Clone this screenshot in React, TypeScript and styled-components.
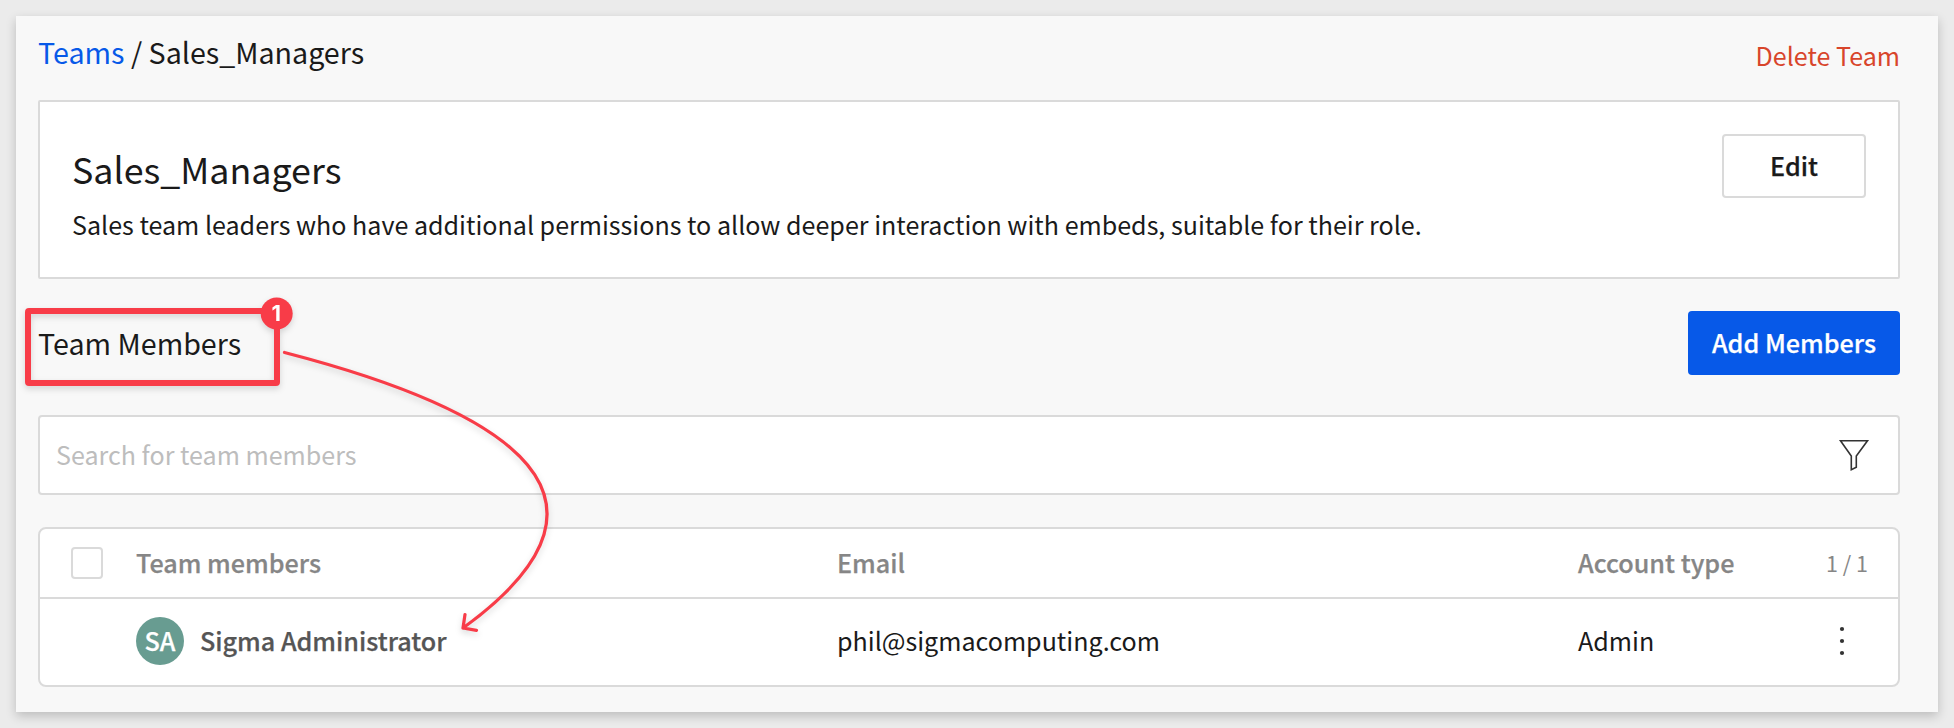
import React from "react";
import styled, { createGlobalStyle, css } from "styled-components";

const GlobalStyle = createGlobalStyle`
  *, *::before, *::after { box-sizing: border-box; }
  body {
    margin: 0;
    background: #ebebeb;
    color: #1a1a1a;
    font-family: "Noto Sans CJK SC", "Noto Sans", sans-serif;
    font-size: 25.07px;
    line-height: 36px;
  }
`;

const border = "#dadada";

const semibold = css`
  font-size: 25.15px;
  font-weight: 500;
  -webkit-text-stroke: 0.25px currentColor;
`;

const Page = styled.div`
  height: 728px;
  padding: 16px;
  overflow: hidden;
`;

const Card = styled.main`
  position: relative;
  height: 696px;
  padding: 16px 38px 0 22px;
  background: #f8f8f8;
  box-shadow: 0 4px 10px rgba(0, 0, 0, 0.2);
`;

const TopBar = styled.header`
  display: flex;
  justify-content: space-between;
  height: 68px;
  padding-top: 2px;
`;

const Breadcrumb = styled.nav`
  font-size: 28.65px;
  line-height: 36px;
  white-space: pre;
`;

const TeamsLink = styled.a`
  color: #0759e8;
`;

const DeleteLink = styled.button`
  align-self: flex-start;
  margin-top: 3px;
  padding: 0;
  border: 0;
  background: none;
  color: #d8452b;
  font: inherit;
`;

const InfoPanel = styled.section`
  display: flex;
  justify-content: space-between;
  align-items: flex-start;
  height: 179px;
  padding: 32px;
  border: 2px solid ${border};
  border-radius: 2px;
  background: #fff;
`;

const TeamName = styled.h1`
  margin: 10px 0 0;
  font-size: 35.8px;
  font-weight: 400;
  line-height: 48px;
`;

const Description = styled.p`
  margin: 14px 0 0;
`;

const Button = styled.button<{ $primary?: boolean }>`
  width: ${(p) => (p.$primary ? 212 : 144)}px;
  height: 64px;
  padding: 0 0 2px;
  border: ${(p) => (p.$primary ? "0" : `2px solid ${border}`)};
  border-radius: 4px;
  background: ${(p) => (p.$primary ? "#0759e8" : "#fff")};
  color: ${(p) => (p.$primary ? "#fff" : "#1a1a1a")};
  font-family: inherit;
  ${semibold}
`;

const SectionBar = styled.div`
  display: flex;
  justify-content: space-between;
  align-items: center;
  height: 64px;
  margin-top: 32px;
`;

const SectionTitle = styled.h2`
  margin: 0;
  font-size: 28.65px;
  font-weight: 400;
`;

const SearchBox = styled.div`
  display: flex;
  justify-content: space-between;
  align-items: center;
  height: 80px;
  margin-top: 40px;
  padding: 0 28px 0 16px;
  border: 2px solid ${border};
  border-radius: 4px;
  background: #fff;
`;

const Placeholder = styled.span`
  padding-bottom: 2px;
  color: #bdbdbd;
`;

const Table = styled.section`
  height: 160px;
  margin-top: 32px;
  border: 2px solid ${border};
  border-radius: 8px;
  background: #fff;
`;

const Row = styled.div<{ $head?: boolean }>`
  display: grid;
  grid-template-columns: 96px 701px 741px 1fr;
  align-items: center;
  height: ${(p) => (p.$head ? 70 : 84)}px;
  border-bottom: ${(p) => (p.$head ? `2px solid ${border}` : "0")};
  color: ${(p) => (p.$head ? "#868686" : "#1a1a1a")};
`;

const Label = styled.span`
  padding-bottom: 2px;
  ${semibold}
`;

const Value = styled.span`
  padding-bottom: 2px;
`;

const Checkbox = styled.span`
  width: 32px;
  height: 32px;
  margin-left: 31px;
  border: 2px solid ${border};
  border-radius: 4px;
`;

const Member = styled.div`
  display: flex;
  align-items: center;
  gap: 16px;
  color: #555;
`;

const Avatar = styled.span`
  width: 48px;
  height: 48px;
  border-radius: 50%;
  background: #689c91;
  color: #fff;
  line-height: 46px;
  text-align: center;
  ${semibold}
`;

const LastCell = styled.div`
  display: flex;
  align-items: center;
  justify-content: space-between;
`;

const Count = styled.span`
  margin-right: 30px;
  font-size: 21.5px;
`;

const MenuDots = styled.svg`
  margin-right: 52px;
`;

const Annotations = styled.svg`
  position: absolute;
  left: 0;
  top: 280px;
  filter: drop-shadow(0 3px 3px rgba(0, 0, 0, 0.15));
`;

export default function App() {
  return (
    <Page>
      <GlobalStyle />
      <Card>
        <TopBar>
          <Breadcrumb>
            <TeamsLink>Teams</TeamsLink> / Sales_Managers
          </Breadcrumb>
          <DeleteLink>Delete Team</DeleteLink>
        </TopBar>
        <InfoPanel>
          <div>
            <TeamName>Sales_Managers</TeamName>
            <Description>
              Sales team leaders who have additional permissions to allow deeper interaction with embeds, suitable for
              their role.
            </Description>
          </div>
          <Button>Edit</Button>
        </InfoPanel>
        <SectionBar>
          <SectionTitle>Team Members</SectionTitle>
          <Button $primary>Add Members</Button>
        </SectionBar>
        <SearchBox>
          <Placeholder>Search for team members</Placeholder>
          <svg width="32" height="32" viewBox="0 0 32 32" fill="none" stroke="#333" strokeWidth="1.6">
            <path d="M2.5 1.8H29.5L18.3 17V28.3L13.3 30.7V17Z" />
          </svg>
        </SearchBox>
        <Table>
          <Row $head>
            <Checkbox />
            <Label>Team members</Label>
            <Label>Email</Label>
            <LastCell>
              <Label>Account type</Label>
              <Count>1 / 1</Count>
            </LastCell>
          </Row>
          <Row>
            <span />
            <Member>
              <Avatar>SA</Avatar>
              <Label>Sigma Administrator</Label>
            </Member>
            <Value>phil@sigmacomputing.com</Value>
            <LastCell>
              <Value>Admin</Value>
              <MenuDots width="8" height="32" fill="#333">
                <circle cx="4" cy="4" r="2.1" />
                <circle cx="4" cy="16" r="2.1" />
                <circle cx="4" cy="28" r="2.1" />
              </MenuDots>
            </LastCell>
          </Row>
        </Table>
        <Annotations width="560" height="350" viewBox="16 296 560 350" fill="none" stroke="#f83c48">
          <rect x="28" y="311" width="249" height="72" rx="1" strokeWidth="6" strokeLinejoin="round" />
          <circle cx="276.7" cy="313.5" r="16" fill="#f83c48" stroke="none" />
          <text x="276.3" y="321" textAnchor="middle" fill="#fff" stroke="none" fontFamily="Inter, sans-serif" fontWeight="700" fontSize="22">
            1
          </text>
          <path d="M284.5 352.5Q695.6 459 463 628M465 614.5L463 628L476.5 630.3" strokeWidth="3.2" strokeLinecap="round" strokeLinejoin="round" />
        </Annotations>
      </Card>
    </Page>
  );
}
